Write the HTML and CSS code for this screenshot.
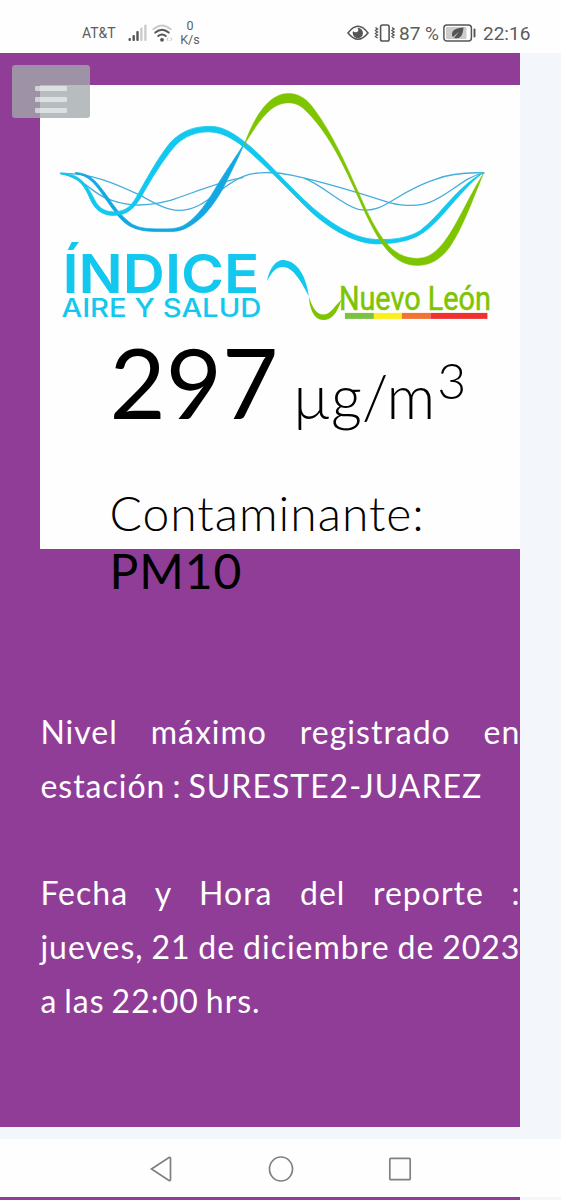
FILE: index.html
```
<!DOCTYPE html>
<html lang="es">
<head>
  <meta charset="UTF-8" />
  <title>Índice Aire y Salud</title>
  <link rel="stylesheet" href="styles.css">
</head>
<body>

  <!-- STATUS BAR -->
  <header class="status-bar">
    <span class="carrier">AT&amp;T</span>
    <svg class="signal" width="20" height="18" viewBox="0 0 20 18">
      <g fill="#555"><rect x="0.5" y="14" width="2.4" height="3" rx="1"/><rect x="4.5" y="11" width="2.4" height="6" rx="1"/><rect x="8.3" y="7" width="2.4" height="10" rx="1"/></g>
      <g fill="#ccc"><rect x="12.2" y="3.5" width="2.4" height="13.5" rx="1"/><rect x="16.2" y="0.5" width="2.4" height="16.5" rx="1"/></g>
    </svg>
    <svg class="wifi" width="22" height="19" viewBox="0 0 22 19" fill="none" stroke-linecap="round">
      <path d="M1.300 5.300Q10-2.300 18.700 5.300" stroke="#ccc" stroke-width="1.900"/>
      <path d="M3.300 8.600Q10 2.800 16.700 8.600M6.200 12Q10 9 13.800 12" stroke="#555" stroke-width="2"/>
      <circle cx="10" cy="15.800" r="1.900" fill="#555"/>
      <path d="M16 14l-1 1.300 1 1.300M18.800 14l1 1.300-1 1.300" stroke="#bbb"/>
    </svg>
    <span class="speed">0<br>K/s</span>
    <svg class="eye" width="22" height="16" viewBox="0 0 22 16">
      <path d="M1 8Q11-5.500 21 8Q11 20.500 1 8Z" fill="none" stroke="#555" stroke-width="1.600"/>
      <path d="M10.500 2.800Q12.500 6.500 9.500 7.200Q7 7.500 6 6A5.200 5.200 0 1 0 10.500 2.800Z" fill="#555"/>
    </svg>
    <svg class="vibrate" width="22" height="18" viewBox="0 0 22 18" fill="none" stroke="#555">
      <rect x="6.600" y="1" width="8.500" height="16" rx="1.800" stroke-width="1.600"/>
      <path d="M1.500 3.500l2 1.500-2 1.500 2 1.500-2 1.500 2 1.500-2 1.500 2 1.500M18 3.500l2 1.500-2 1.500 2 1.500-2 1.500 2 1.500-2 1.500 2 1.500" stroke-width="1.400"/>
    </svg>
    <span class="percent">87 %</span>
    <svg class="battery" width="34" height="18" viewBox="0 0 34 18">
      <rect x="0.900" y="1" width="27.500" height="16" rx="3" fill="none" stroke="#555" stroke-width="1.500"/>
      <rect x="3" y="3" width="20.500" height="12" rx="1" fill="#ccc"/>
      <path d="M20.500 3.500C13 4 9 6 9 10.500Q9 12 10 13L16 7.500 11 14Q20 16 20.500 3.500Z" fill="#555"/>
      <path d="M31.500 5.500v7" stroke="#555" stroke-width="1.900" stroke-linecap="round"/>
    </svg>
    <span class="clock">22:16</span>
  </header>

  <!-- REPORT -->
  <main class="report">
    <button class="menu-btn"><span></span><span></span><span></span></button>

    <div class="card">
      <svg class="logo" width="480" height="245" viewBox="-0.400 -0.400 480 245">
        <g fill="none" stroke="#45addd" stroke-width="1.300">
          <path d="M20 88C50 87 75 98 100 110C115 118 126 125 138 125C165 125 178 101 203 91C215 86 235 86 252 90C285 97 320 108 345 116C356 120 377 122 389 117C410 109 424 91 444 87.500"/>
          <path d="M20 88C42 92 49 105 64 112C84 121 103 122 130 115C154 107 180 96 203 92M264 93C283 100 300 119 318 124C345 129 354 107 395 94C410 88 430 87 444 87.500"/>
        </g>
        <path fill="#12a8e2" stroke="#12a8e2" stroke-width="0.800" d="M35 87C50 88 56 96 67 111C75 123 82 132 92 139C100 143 108 143.500 118 143.500C130 143.500 137 144 145 139C158 131 168 115 178 98C188 82 195 72 204 58C196 76 190 88 182 104C172 121 162 134 147 142C138 147 130 146 118 146C106 146 98 145 90 141C80 136 73 124 64 112C55 98 48 90 35 88Z"/>
        <path fill="#12c8ee" stroke="#12c8ee" stroke-width="0.800" d="M20 87.500C38 88 45 97 52 110C57 121 62 126 73 126.500C88 126.500 93 117 98 108C108 90 118 72 130 57C143 44 155 41 170 41C182 41 192 47 205 57C225 73 250 103 272 122C285 133 310 153 335 154C358 155 370 151 380 145C400 130 415 103 442 87.500C415 110 400 137 380 149C370 155 355 158.500 335 158.500C310 157 285 140 268 124C245 101 225 80 204 62C192 53 182 47 170 46.500C157 46 145 50 135 60C122 75 110 95 101 111C95 121 88 130 73 130C62 130 54 124 49.500 113C44 100 38 91 20 88.500Z"/>
        <path fill="#7fc400" stroke="#7fc400" stroke-width="0.500" d="M203.500 60C213 34 227 8 248 8C259 8 267 14 274 24C293 50 305 78 319 109C337 150 351 173 377 173C405 173 418 128 443 88C431 118 422 142 411 159C401 174 390 180 377 180C353 180 340 159 325 128C307 87 289 47 264 24C259 19 254 17.500 248 17.500C233 17.500 222 29 203.500 60Z"/>
        <path fill="#12c8ee" d="M226.500 196C229 182 236 174.500 242.500 174.500C257 175 266 191 268.500 211C260 194 252 181.500 242.500 181.500C235 181.500 231 187 226.500 196Z"/>
        <path fill="#7fc400" d="M268.500 211C272 222 276 229 283 229C290 229 294 221 301 214C297 228 291 234.500 283 234.500C273 234.500 269 222 268.500 211Z"/>
        <text class="logo-title" x="22" y="208" textLength="197" lengthAdjust="spacingAndGlyphs">ÍNDICE</text>
        <text class="logo-sub" x="21" y="232" textLength="200" lengthAdjust="spacingAndGlyphs">AIRE Y SALUD</text>
        <text class="logo-state" x="298.500" y="225" textLength="152" lengthAdjust="spacingAndGlyphs">Nuevo León</text>
        <rect x="304.500" y="227.500" width="29" height="6" fill="#7cc142"/>
        <rect x="333.500" y="227.500" width="28" height="6" fill="#fdee1c"/>
        <rect x="361.500" y="227.500" width="28.500" height="6" fill="#f37334"/>
        <rect x="390" y="227.500" width="57" height="6" fill="#ee3230"/>
      </svg>

      <div class="reading">
        <div class="value"><b>297</b> <span class="unit">µg/m<sup>3</sup></span></div>
        <div class="pollutant">Contaminante: <b>PM10</b></div>
      </div>
    </div>

    <p class="details">
      Nivel máximo registrado en estación : SURESTE2-JUAREZ<br><br>
      Fecha y Hora del reporte : jueves, 21 de diciembre de 2023 a las 22:00 hrs.
    </p>
  </main>

  <!-- NAVIGATION BAR -->
  <nav class="nav-bar">
    <svg width="26" height="28" viewBox="0 0 26 28"><path d="M2.500 14L20 2.500Q21.500 1.800 21.500 3.500V24.500Q21.500 26.200 20 25.500Z"/></svg>
    <svg width="26" height="28" viewBox="0 0 26 28"><ellipse cx="13" cy="14" rx="11.500" ry="12"/></svg>
    <svg width="26" height="28" viewBox="0 0 26 28"><rect x="2.800" y="3.300" width="20.400" height="21.400" rx="1"/></svg>
  </nav>
  <div class="next-block"></div>

</body>
</html>
```
FILE: styles.css
```
* {
  box-sizing: border-box;
}
body {
  font-family: Lato, sans-serif;
  margin: 0;
  height: 1200px;
  overflow: hidden;
  background: #f3f6fb;
  color: #000;
}

.status-bar {
  display: flex;
  align-items: center;
  height: 53px;
  padding: 13px 0 0 82px;
  background: #fefefe;
  color: #5c5c5c;
  font-family: Roboto, sans-serif;
}

.status-bar svg {
  flex: none;
}

.carrier {
  width: 46px;
  font-size: 14px;
}

.wifi {
  margin-left: 4px;
}

.speed {
  width: 24px;
  margin-left: 4px;
  font-size: 12.5px;
  line-height: 14.5px;
  text-align: center;
}

.eye {
  margin-left: 145px;
}

.vibrate {
  margin-left: 5px;
}

.percent {
  width: 44px;
  margin-left: 3px;
  font-size: 19px;
  white-space: nowrap;
}

.clock {
  margin-left: 6px;
  font-size: 19px;
}

.report {
  position: relative;
  width: 520.4px;
  height: 1074.4px;
  padding: 32px 0 0 40.4px;
  background: #8f3d97;
}

.menu-btn {
  position: absolute;
  left: 12px;
  top: 12px;
  display: flex;
  flex-direction: column;
  gap: 6px;
  width: 78px;
  height: 53px;
  padding: 21px 0 0 23px;
  border: none;
  border-radius: 3px;
  background: rgba(163, 170, 172, 0.78);
}

.menu-btn span {
  width: 32px;
  height: 5px;
  border-radius: 1px;
  background: rgba(240, 243, 243, 0.65);
}

.card {
  height: 464px;
  background: #fefefe;
}

.logo {
  display: block;
}

.logo-title,
.logo-sub {
  font-family: Inter, sans-serif;
  fill: #12c8ee;
}

.logo-title {
  font-size: 53.5px;
  font-weight: 600;
}

.logo-sub {
  font-size: 25px;
  font-weight: 500;
}

.logo-state {
  font-family: Roboto, sans-serif;
  font-size: 32.5px;
  font-weight: 400;
  fill: #7fc400;
  stroke: #7fc400;
  stroke-width: 0.5px;
}

.reading {
  padding-left: 69px;
  font-weight: 300;
}

.reading b {
  font-weight: 400;
}

.value {
  height: 154px;
  font-size: 97px;
  line-height: 104px;
  white-space: nowrap;
}

.unit {
  font-size: 60.5px;
  margin-left: -12px;
}

.unit sup {
  font-size: 50px;
  line-height: 0;
  vertical-align: 20px;
  margin-left: 2px;
}

.pollutant {
  width: 370px;
  font-size: 48px;
  line-height: 57.6px;
  letter-spacing: 1px;
}

.details {
  margin: 156px 0 0;
  color: #fff;
  font-size: 32px;
  line-height: 53.8px;
  letter-spacing: 1px;
  word-spacing: -2.2px;
  text-align: justify;
}

.nav-bar {
  display: flex;
  justify-content: center;
  align-items: center;
  gap: 93px;
  height: 58px;
  margin-top: 11.6px;
  padding-top: 3px;
  background: #fefefe;
}

.nav-bar svg {
  fill: none;
  stroke: #808080;
  stroke-width: 1.7;
}

.next-block {
  width: 520.4px;
  height: 3px;
  background: #8f3d97;
}
```
